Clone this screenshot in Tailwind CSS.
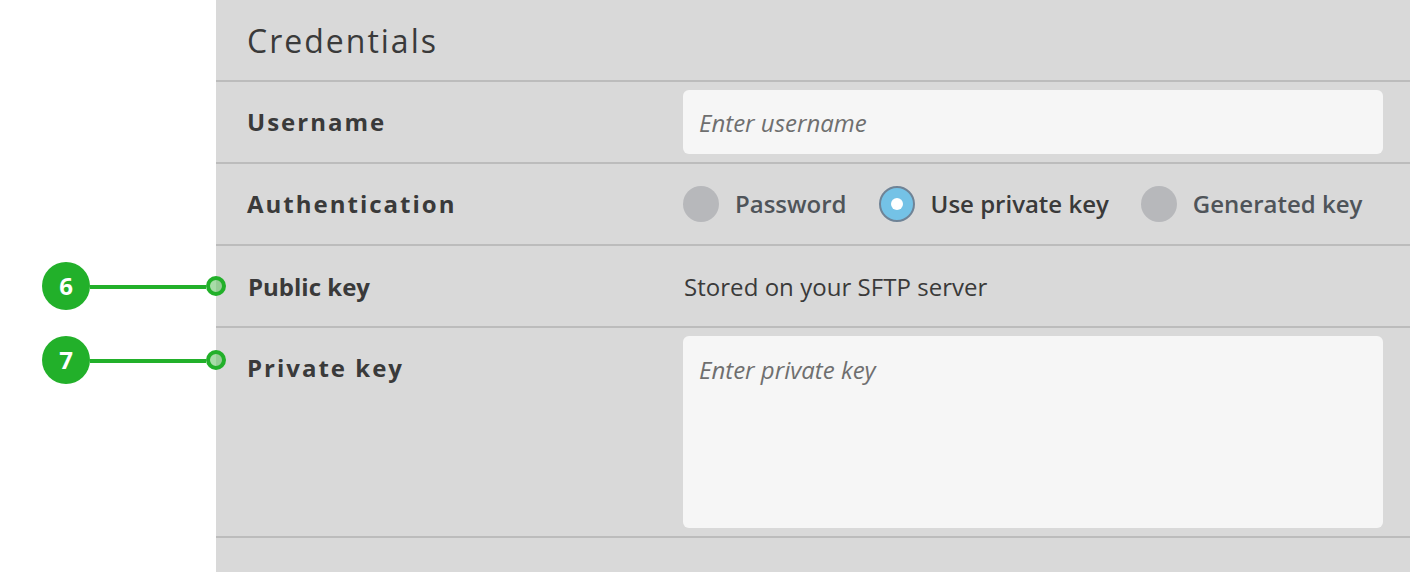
<!DOCTYPE html>
<html lang="en">
<head>
  <meta charset="UTF-8" />
  <title>Credentials</title>
  <script src="https://cdn.jsdelivr.net/npm/@tailwindcss/browser@4"></script>
</head>
<body class="bg-white font-['Open_Sans',sans-serif] text-[#3a3a3a] overflow-hidden">
  <div class="relative h-[572px] w-[1410px] pl-[216px]">
    <div class="h-full bg-[#d9d9d9]">
      <!-- Header -->
      <div class="flex h-[82px] items-center border-b-2 border-[#bcbcbc] pl-[31px]">
        <h2 class="pt-0.5 text-[32px] font-normal tracking-[2px]">Credentials</h2>
      </div>

      <!-- Username -->
      <div class="flex h-[82px] items-center border-b-2 border-[#bcbcbc]">
        <label class="w-[467px] pl-[31px] text-2xl font-bold tracking-[2px]">Username</label>
        <input type="text" placeholder="Enter username" class="h-16 w-[700px] rounded-md bg-[#f6f6f6] px-4 text-2xl italic outline-none placeholder:text-[#6f6f6f]" />
      </div>

      <!-- Authentication -->
      <div class="flex h-[82px] items-center border-b-2 border-[#bcbcbc]">
        <label class="w-[467px] pl-[31px] text-2xl font-bold tracking-[2px]">Authentication</label>
        <div class="flex items-center text-2xl font-semibold">
          <span class="h-9 w-9 rounded-full bg-[#b7b8bb]"></span>
          <span class="ml-[16px] text-[#4f5459]">Password</span>
          <span class="ml-[32px] flex h-9 w-9 items-center justify-center rounded-full border-2 border-[#6f8396] bg-[#74c2e6]">
            <span class="h-3 w-3 rounded-full bg-white"></span>
          </span>
          <span class="ml-[16px]">Use private key</span>
          <span class="ml-[32px] h-9 w-9 rounded-full bg-[#b7b8bb]"></span>
          <span class="ml-[16px] text-[#4f5459]">Generated key</span>
        </div>
      </div>

      <!-- Public key -->
      <div class="flex h-[82px] items-center border-b-2 border-[#bcbcbc]">
        <label class="w-[467px] pl-[32px] pt-0.5 text-2xl font-bold">Public key</label>
        <p class="pl-px pt-0.5 text-2xl tracking-[0.04px]">Stored on your SFTP server</p>
      </div>

      <!-- Private key -->
      <div class="flex h-[210px] items-start border-b-2 border-[#bcbcbc] pt-2">
        <label class="w-[467px] pl-[31px] pt-4 text-2xl font-bold tracking-[2px]">Private key</label>
        <textarea placeholder="Enter private key" class="h-48 w-[700px] resize-none rounded-md bg-[#f6f6f6] px-4 py-[18px] text-2xl italic outline-none placeholder:text-[#6f6f6f]"></textarea>
      </div>
    </div>

    <!-- Callouts -->
    <div class="absolute left-[42px] top-[262px] flex items-center">
      <span class="flex h-12 w-12 items-center justify-center rounded-full bg-[#22b02a] text-2xl font-bold text-white">6</span>
      <span class="mt-[2px] h-1 w-[116px] bg-[#22b02a]"></span>
      <span class="h-5 w-5 rounded-full border-4 border-[#22b02a] bg-[linear-gradient(90deg,#a8dca8_50%,#96cc96_50%)]"></span>
    </div>
    <div class="absolute left-[42px] top-[336px] flex items-center">
      <span class="flex h-12 w-12 items-center justify-center rounded-full bg-[#22b02a] text-2xl font-bold text-white">7</span>
      <span class="mt-[2px] h-1 w-[116px] bg-[#22b02a]"></span>
      <span class="h-5 w-5 rounded-full border-4 border-[#22b02a] bg-[linear-gradient(90deg,#a8dca8_50%,#96cc96_50%)]"></span>
    </div>
  </div>
</body>
</html>
